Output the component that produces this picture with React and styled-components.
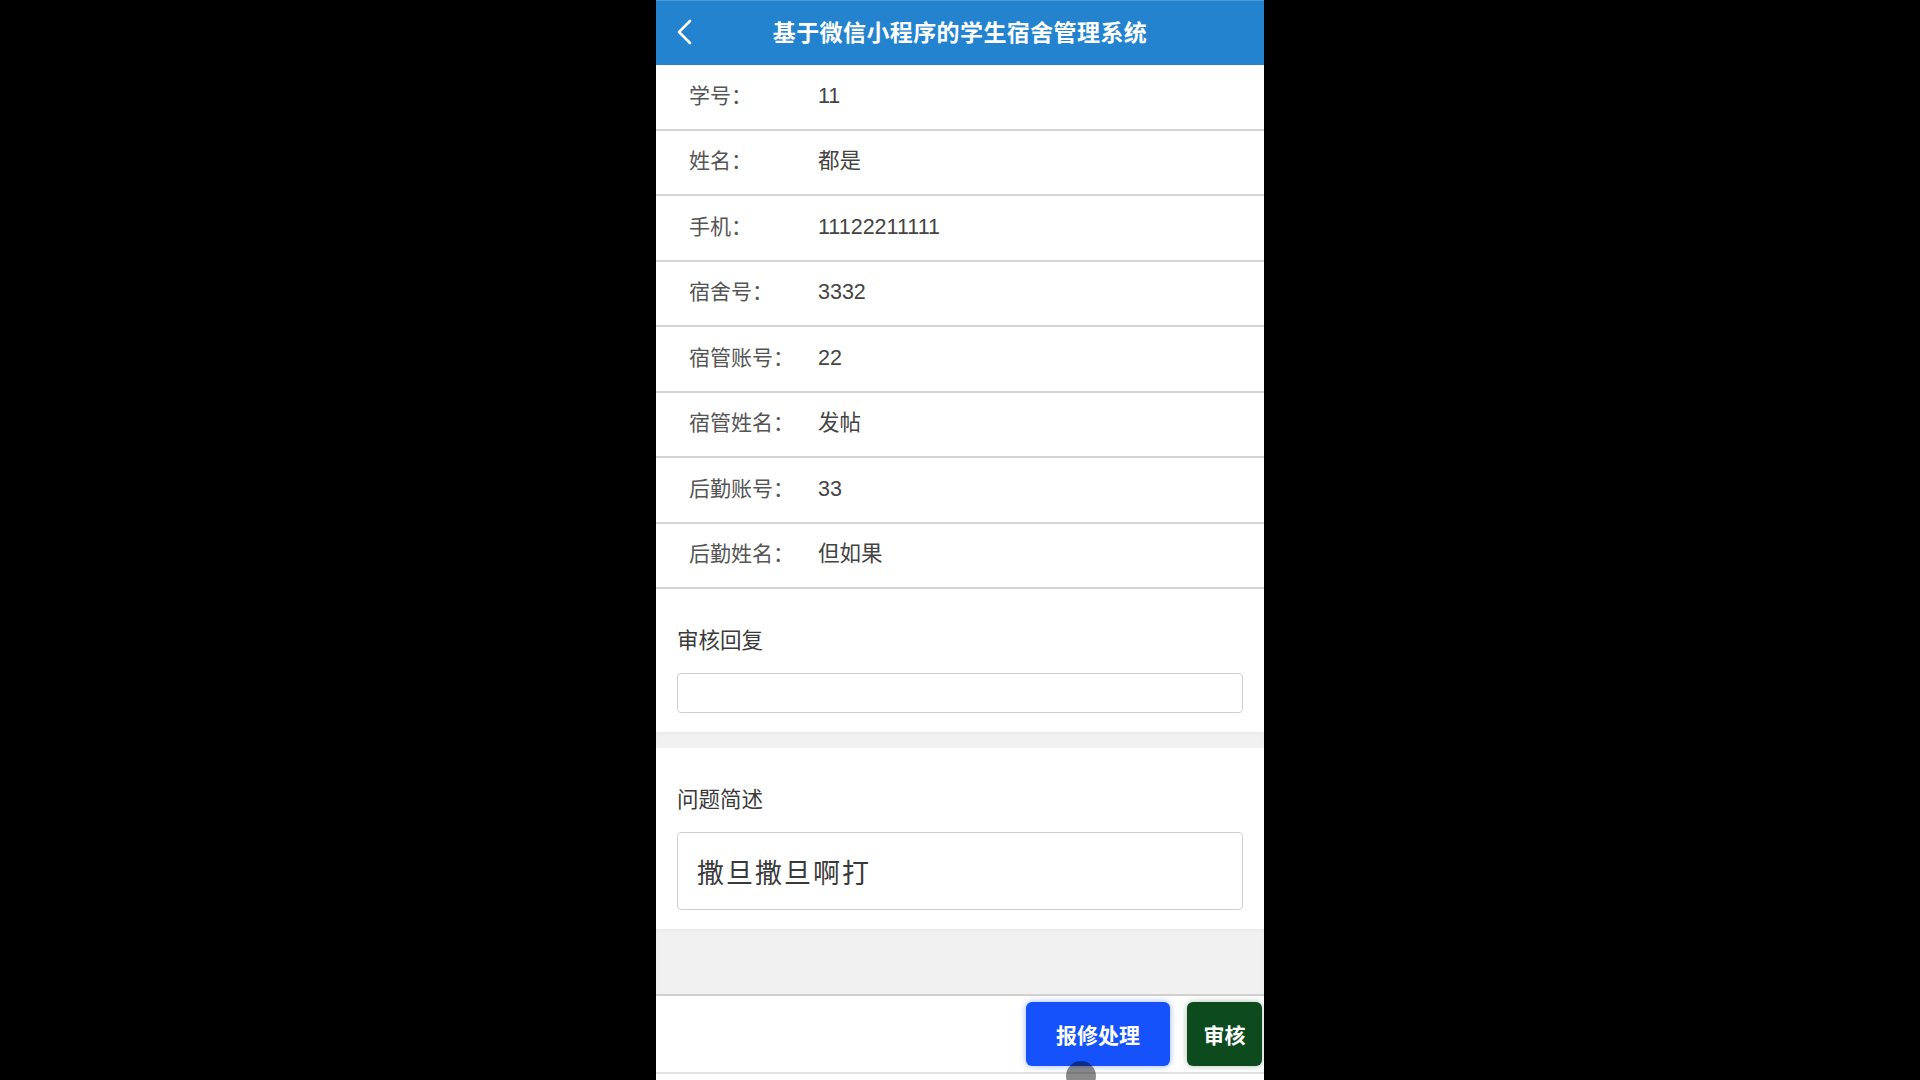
import React from "react";
import styled, { createGlobalStyle } from "styled-components";

const Global = createGlobalStyle`
  html, body { margin: 0; padding: 0; background: #000; }
  body { font-family: "Liberation Sans", "Noto Sans CJK SC", sans-serif; }
  * { box-sizing: border-box; }
`;

const Phone = styled.div`
  position: relative;
  width: 608px;
  height: 1080px;
  margin: 0 auto;
  background: #fff;
  overflow: hidden;
  display: flex;
  flex-direction: column;
`;

const Header = styled.header`
  position: relative;
  height: 65px;
  flex: none;
  background: #2383cf;
  border-top: 1px solid #4d9ad8;
  padding-bottom: 5px;
  display: flex;
  align-items: center;
  justify-content: center;
`;

const BackBtn = styled.div`
  position: absolute;
  left: 16px;
  top: 17px;
  width: 24px;
  height: 28px;
  display: flex;
  align-items: center;
  justify-content: center;
`;

const Title = styled.h1`
  margin: 0;
  color: #fff;
  font-family: "Noto Sans CJK SC", sans-serif;
  font-size: 23px;
  line-height: 30px;
  font-weight: 700;
  letter-spacing: 0.4px;
`;

const Row = styled.div`
  height: 65.5px;
  flex: none;
  display: flex;
  align-items: center;
  padding-left: 33px;
  padding-bottom: 4px;
  border-bottom: 2px solid #d4d4d4;
  font-size: 21px;
`;

const Line = styled.div`
  display: flex;
  align-items: baseline;
  line-height: 30px;
`;

const Label = styled.span`
  width: 129px;
  flex: none;
  color: #555;
  font-family: "Noto Sans CJK SC", sans-serif;
`;

const Value = styled.span`
  color: #444;
  font-size: 21.5px;
  font-family: "Liberation Sans", "Noto Sans CJK SC", sans-serif;
`;

const Section = styled.section`
  flex: none;
  padding: 36px 21px 19px;
  display: flex;
  flex-direction: column;
  gap: 20px;
`;

const SectionLabel = styled.div`
  font-family: "Noto Sans CJK SC", sans-serif;
  font-size: 21.5px;
  line-height: 28px;
  color: #3a3a3a;
`;

const Field = styled.div`
  height: ${(p) => p.$h}px;
  border: 1px solid #cfcfcf;
  border-radius: 4px;
  background: #fff;
  display: flex;
  align-items: center;
  padding-left: 19px;
  font-family: "Noto Sans CJK SC", sans-serif;
  font-size: 27px;
  letter-spacing: 2px;
  color: #3a3a3a;
`;

const Strip = styled.div`
  height: ${(p) => p.$h}px;
  flex: none;
  background: #f1f1f1;
  box-shadow: inset 0 2px 3px rgba(0, 0, 0, 0.03);
`;

const Footer = styled.footer`
  flex: none;
  height: 80px;
  border-top: 2px solid #d0d0d0;
  border-bottom: 2px solid #e2e2e2;
  display: flex;
  align-items: center;
  justify-content: flex-end;
  gap: 17px;
  padding-right: 2px;
`;

const Button = styled.button`
  height: 64px;
  width: ${(p) => p.$w}px;
  border: none;
  border-radius: 6px;
  background: ${(p) => p.$bg};
  color: #fff;
  font-family: "Noto Sans CJK SC", sans-serif;
  font-size: 21px;
  font-weight: 600;
  box-shadow: 0 0 6px ${(p) => p.$glow};
  cursor: pointer;
`;

const Touch = styled.div`
  position: absolute;
  left: ${1081 - 656 - 15}px;
  top: 1061px;
  width: 30px;
  height: 30px;
  border-radius: 50%;
  background: rgba(0, 0, 0, 0.46);
  pointer-events: none;
`;

const rows = [
  ["学号：", "11"],
  ["姓名：", "都是"],
  ["手机：", "11122211111"],
  ["宿舍号：", "3332"],
  ["宿管账号：", "22"],
  ["宿管姓名：", "发帖"],
  ["后勤账号：", "33"],
  ["后勤姓名：", "但如果"],
];

export default function App() {
  return (
    <>
      <Global />
      <Phone>
        <Header>
          <BackBtn>
            <svg width="16" height="26" viewBox="0 0 16 26" fill="none">
              <path d="M14 2 L3 13 L14 24" stroke="#fff" strokeWidth="2.6" strokeLinecap="round" strokeLinejoin="round" />
            </svg>
          </BackBtn>
          <Title>基于微信小程序的学生宿舍管理系统</Title>
        </Header>
        {rows.map(([l, v]) => (
          <Row key={l}>
            <Line>
              <Label>{l}</Label>
              <Value>{v}</Value>
            </Line>
          </Row>
        ))}
        <Section>
          <SectionLabel>审核回复</SectionLabel>
          <Field $h={40} />
        </Section>
        <Strip $h={16} />
        <Section>
          <SectionLabel>问题简述</SectionLabel>
          <Field $h={78}>撒旦撒旦啊打</Field>
        </Section>
        <Strip $h={65} />
        <Footer>
          <Button $w={144} $bg="#1552fb" $glow="rgba(21,82,251,0.45)">报修处理</Button>
          <Button $w={75} $bg="#0d4a1e" $glow="rgba(13,74,30,0.35)">审核</Button>
        </Footer>
        <Touch />
      </Phone>
    </>
  );
}
